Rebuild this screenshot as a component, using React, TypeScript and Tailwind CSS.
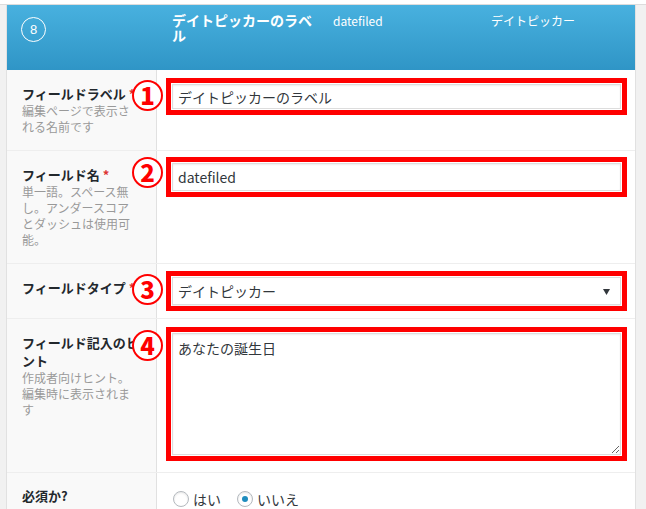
import React from 'react';

const jp = { fontFamily: '"Noto Sans CJK JP", "Noto Sans", sans-serif' };

function Marker({ n, top }: { n: string; top: string }) {
  return (
    <div className={`absolute left-[125px] ${top} w-[31px] h-[31px] rounded-full border-2 border-[#ff0000] bg-white flex items-center justify-center`}>
      <span className="text-[#ff0000] text-[24px] font-black leading-none -mt-[1px]">{n}</span>
    </div>
  );
}

function RedBox({ children }: { children: React.ReactNode }) {
  return <div className="border-[5px] border-[#ff0000] p-[1px] bg-white">{children}</div>;
}

function Label({ text, req, desc, pb = 'pb-[15px]' }: { text: string; req?: boolean; desc?: string[]; pb?: string }) {
  return (
    <div className={`w-[150px] shrink-0 bg-[#f9f9f9] border-r border-[#e1e1e1] pl-[15px] pr-[17px] pt-[15px] ${pb}`}>
      <div className="text-[13px] leading-[18px] font-bold text-[#23282d]">
        {text}
        {req && <span className="text-[#dd3333] ml-[3px]">*</span>}
      </div>
      {desc && (
        <div className="text-[12px] leading-[16px] text-[#999999]">
          {desc.map((d) => (
            <div key={d}>{d}</div>
          ))}
        </div>
      )}
    </div>
  );
}

export default function App() {
  return (
    <div className="w-[646px] h-[509px] overflow-hidden bg-[#f1f1f1]" style={jp}>
      <div className="h-[5px] bg-white border-b border-[#dcdcdc]" />
      <div className="ml-[6px] w-[630px] bg-white border-x border-[#e1e1e1]">
        {/* header */}
        <div className="h-[65px] flex items-start bg-gradient-to-b from-[#48b1df] to-[#2f95c6] text-white">
          <div className="w-[165px] pl-[14px] pt-[12px]">
            <div className="w-[25px] h-[25px] rounded-full border-[1.5px] border-white flex items-center justify-center text-[13px] leading-none" style={{ fontFamily: '"Liberation Sans", sans-serif' }}>
              8
            </div>
          </div>
          <div className="w-[161px] pt-[8px]">
            <div className="w-[148px] text-[14px] leading-[15px] font-bold">デイトピッカーのラベル</div>
          </div>
          <div className="w-[158px] pt-[8px] text-[12px] leading-[16px]">datefiled</div>
          <div className="pt-[8px] text-[12px] leading-[16px]">デイトピッカー</div>
        </div>

        {/* row 1 */}
        <div className="relative flex">
          <Label text="フィールドラベル" req desc={['編集ページで表示さ', 'れる名前です']} />
          <div className="flex-1 pl-[9px] pr-[8px] pt-[8px]">
            <RedBox>
              <div className="h-[25px] border border-[#dddddd] shadow-[inset_0_1px_2px_rgba(0,0,0,0.07)] px-[5px] text-[14px] leading-[24px] text-[#32373c]">
                デイトピッカーのラベル
              </div>
            </RedBox>
          </div>
          <Marker n="1" top="top-[10px]" />
        </div>

        {/* row 2 */}
        <div className="relative flex border-t border-[#eeeeee]">
          <Label text="フィールド名" req desc={['単一語。スペース無', 'し。アンダースコア', 'とダッシュは使用可', '能。']} />
          <div className="flex-1 pl-[9px] pr-[8px] pt-[6px]">
            <RedBox>
              <div className="h-[28px] border border-[#dddddd] shadow-[inset_0_1px_2px_rgba(0,0,0,0.07)] px-[5px] text-[14px] leading-[26px] text-[#32373c]">
                datefiled
              </div>
            </RedBox>
          </div>
          <Marker n="2" top="top-[6px]" />
        </div>

        {/* row 3 */}
        <div className="relative flex border-t border-[#eeeeee]">
          <Label text="フィールドタイプ" req />
          <div className="flex-1 pl-[9px] pr-[8px] py-[7px]">
            <RedBox>
              <div className="h-[28px] flex items-center justify-between border border-[#dddddd] shadow-[0_1px_1px_rgba(0,0,0,0.05)] pl-[5px] pr-[10px] text-[14px] text-[#32373c]">
                <span>デイトピッカー</span>
                <svg width="7" height="7" viewBox="0 0 7 7">
                  <path d="M0 1h7L3.5 7z" fill="#32373c" />
                </svg>
              </div>
            </RedBox>
          </div>
          <Marker n="3" top="top-[10px]" />
        </div>

        {/* row 4 */}
        <div className="relative flex border-t border-[#eeeeee]">
          <Label text="フィールド記入のヒント" desc={['作成者向けヒント。', '編集時に表示されま', 'す']} />
          <div className="flex-1 pl-[9px] pr-[8px] pt-[8px] pb-[11px]">
            <RedBox>
              <textarea
                readOnly
                defaultValue="あなたの誕生日"
                className="block w-full h-[122px] resize-y border border-[#dddddd] shadow-[inset_0_1px_2px_rgba(0,0,0,0.07)] px-[5px] py-[4px] text-[14px] leading-[20px] text-[#32373c] outline-none"
                style={jp}
              />
            </RedBox>
          </div>
          <Marker n="4" top="top-[11px]" />
        </div>

        {/* row 5 */}
        <div className="relative flex border-t border-[#eeeeee] h-[40px]">
          <div className="w-[150px] shrink-0 bg-[#f9f9f9] border-r border-[#e1e1e1] pl-[15px] pt-[14px]">
            <div className="text-[13px] leading-[18px] font-bold text-[#23282d]">必須か?</div>
          </div>
          <div className="flex-1 pl-[16px] pt-[17px] flex items-start gap-[16px] text-[14px] leading-[18px] text-[#32373c]">
            <div className="flex items-center gap-[4px]">
              <span className="w-[16px] h-[16px] rounded-full border border-[#b4b9be] bg-white shadow-[inset_0_1px_2px_rgba(0,0,0,0.1)]" />
              <span>はい</span>
            </div>
            <div className="flex items-center gap-[4px]">
              <span className="w-[16px] h-[16px] rounded-full border border-[#b4b9be] bg-white shadow-[inset_0_1px_2px_rgba(0,0,0,0.1)] flex items-center justify-center">
                <span className="w-[6px] h-[6px] rounded-full bg-[#1e8cbe]" />
              </span>
              <span>いいえ</span>
            </div>
          </div>
        </div>
      </div>
    </div>
  );
}
